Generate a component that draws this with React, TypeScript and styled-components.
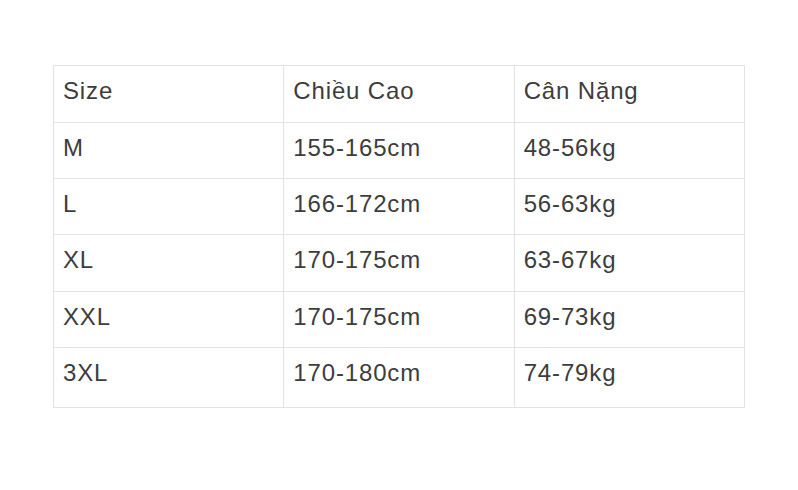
import React from "react";
import styled, { createGlobalStyle } from "styled-components";

const Global = createGlobalStyle`
  html, body { margin: 0; padding: 0; background: #ffffff; }
  body { font-family: "Liberation Sans", Arial, sans-serif; }
`;

const Page = styled.div`
  width: 798px;
  height: 490px;
  box-sizing: border-box;
  padding-top: 65px;
  display: flex;
  justify-content: center;
  align-items: flex-start;
`;

const Table = styled.table`
  width: 692px;
  border-collapse: collapse;
  table-layout: fixed;
  border: 1px solid #e2e2e2;
`;

const Cell = styled.td<{ $h: number }>`
  border: 1px solid #e2e2e2;
  box-sizing: border-box;
  height: ${(p) => p.$h}px;
  padding: 8px 9px 0 9px;
  vertical-align: top;
  font-size: 24px;
  line-height: 34px;
  letter-spacing: 0.85px;
  color: #3d3d3d;
  font-family: "Liberation Sans", Arial, sans-serif;
`;

const rows: { h: number; cells: string[] }[] = [
  { h: 57, cells: ["Size", "Chiều Cao", "Cân Nặng"] },
  { h: 56, cells: ["M", "155-165cm", "48-56kg"] },
  { h: 56, cells: ["L", "166-172cm", "56-63kg"] },
  { h: 57, cells: ["XL", "170-175cm", "63-67kg"] },
  { h: 56, cells: ["XXL", "170-175cm", "69-73kg"] },
  { h: 60, cells: ["3XL", "170-180cm", "74-79kg"] },
];

export default function App() {
  return (
    <>
      <Global />
      <Page>
        <Table>
          <tbody>
            {rows.map((r, i) => (
              <tr key={i}>
                {r.cells.map((c, j) => (
                  <Cell key={j} $h={r.h}>
                    {c}
                  </Cell>
                ))}
              </tr>
            ))}
          </tbody>
        </Table>
      </Page>
    </>
  );
}
